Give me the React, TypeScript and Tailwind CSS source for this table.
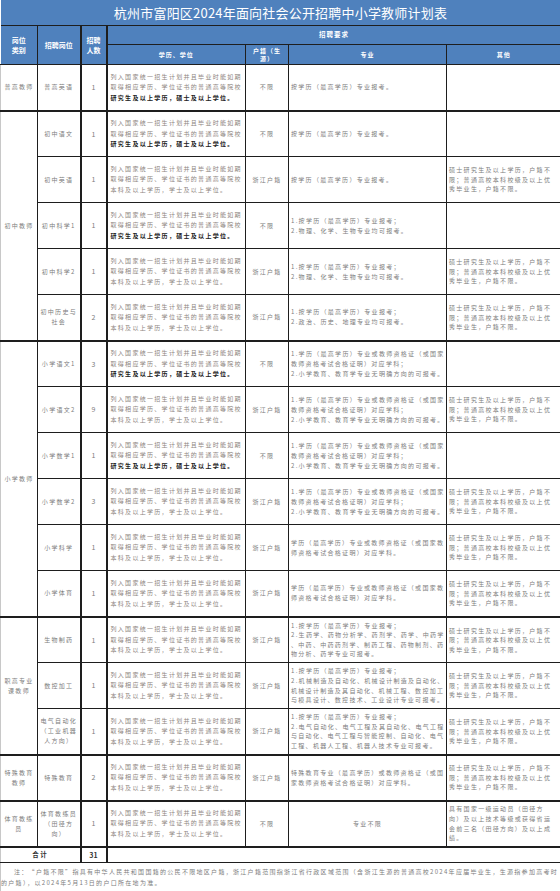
import React from "react";

const EDU1 = "列入国家统一招生计划并且毕业时能如期";
const EDU2 = "取得相应学历、学位证书的普通高等院校";
const EDU_A3 = "研究生及以上学历，硕士及以上学位。";
const EDU_B3 = "本科及以上学历，学士及以上学位。";
const OTHER = ["硕士研究生及以上学历，户籍不", "限；普通高校本科校级及以上优", "秀毕业生，户籍不限。"];
const ZY_PLAIN = ["按学历（最高学历）专业报考。"];
const ZY_SCI = ["1.按学历（最高学历）专业报考；", "2.物理、化学、生物专业均可报考。"];
const ZY_HIS = ["1.按学历（最高学历）专业报考；", "2.政治、历史、地理专业均可报考。"];
const ZY_XX = ["1.学历（最高学历）专业或教师资格证（或国家", "教师资格考试合格证明）对应学科；", "2.小学教育、教育学专业无明确方向的可报考。"];
const ZY_XX2 = ["学历（最高学历）专业或教师资格证（或国家教", "师资格考试合格证明）对应学科。"];
const ZY_BIO = ["1.按学历（最高学历）专业报考；", "2.生药学、药物分析学、药剂学、药学、中药学", "、中药、中药药剂学、制药工程、药物制剂、药", "物分析、药学专业可报考。"];
const ZY_CNC = ["1.按学历（最高学历）专业报考；", "2.机械制造及自动化、机械设计制造及自动化、", "机械设计制造及其自动化、机械工程、数控加工", "与模具设计、数控技术、工业设计专业可报考。"];
const ZY_ELE = ["1.按学历（最高学历）专业报考；", "2.电气自动化、电气工程及其自动化、电气工程", "与自动化、电气工程与智能控制、自动化、电气", "工程、机器人工程、机器人技术专业可报考。"];
const ZY_TS = ["特殊教育专业（最高学历）或教师资格证（或国", "家教师资格考试合格证明）对应学科。"];
const OTHER_PE = ["具有国家一级运动员（田径方", "向）及以上技术等级或获得省运", "会前三名（田径方向）及以上成", "绩。"];

type Row = {
  cat?: { lines: string[]; span: number };
  pos: string[];
  n: string;
  a: boolean;
  hj: string;
  zy: string[];
  zyCenter?: boolean;
  other: string[];
  end?: boolean;
};

const rows: Row[] = [
  { cat: { lines: ["普高教师"], span: 1 }, pos: ["普高英语"], n: "1", a: true, hj: "不限", zy: ZY_PLAIN, other: [], end: true },
  { cat: { lines: ["初中教师"], span: 5 }, pos: ["初中语文"], n: "1", a: true, hj: "不限", zy: ZY_PLAIN, other: [] },
  { pos: ["初中英语"], n: "1", a: false, hj: "浙江户籍", zy: ZY_PLAIN, other: OTHER },
  { pos: ["初中科学1"], n: "1", a: true, hj: "不限", zy: ZY_SCI, other: [] },
  { pos: ["初中科学2"], n: "1", a: false, hj: "浙江户籍", zy: ZY_SCI, other: OTHER },
  { pos: ["初中历史与", "社会"], n: "2", a: false, hj: "浙江户籍", zy: ZY_HIS, other: OTHER, end: true },
  { cat: { lines: ["小学教师"], span: 6 }, pos: ["小学语文1"], n: "3", a: true, hj: "不限", zy: ZY_XX, other: [] },
  { pos: ["小学语文2"], n: "9", a: false, hj: "浙江户籍", zy: ZY_XX, other: OTHER },
  { pos: ["小学数学1"], n: "1", a: true, hj: "不限", zy: ZY_XX, other: [] },
  { pos: ["小学数学2"], n: "3", a: false, hj: "浙江户籍", zy: ZY_XX, other: OTHER },
  { pos: ["小学科学"], n: "1", a: false, hj: "浙江户籍", zy: ZY_XX2, other: OTHER },
  { pos: ["小学体育"], n: "1", a: false, hj: "浙江户籍", zy: ZY_XX2, other: OTHER, end: true },
  { cat: { lines: ["职高专业", "课教师"], span: 3 }, pos: ["生物制药"], n: "1", a: false, hj: "浙江户籍", zy: ZY_BIO, other: OTHER },
  { pos: ["数控加工"], n: "1", a: false, hj: "浙江户籍", zy: ZY_CNC, other: OTHER },
  { pos: ["电气自动化", "（工业机器", "人方向）"], n: "1", a: false, hj: "浙江户籍", zy: ZY_ELE, other: OTHER, end: true },
  { cat: { lines: ["特殊教育", "教师"], span: 1 }, pos: ["特殊教育"], n: "2", a: false, hj: "浙江户籍", zy: ZY_TS, other: OTHER, end: true },
  { cat: { lines: ["体育教练", "员"], span: 1 }, pos: ["体育教练员", "（田径方", "向）"], n: "1", a: false, hj: "不限", zy: ["专业不限"], zyCenter: true, other: OTHER_PE, end: true },
];

function Lines({ lines, className = "" }: { lines: string[]; className?: string }) {
  return (
    <div className={className}>
      {lines.map((l, i) => (
        <div key={i} className="whitespace-nowrap">
          {l}
        </div>
      ))}
    </div>
  );
}

export default function App() {
  const cell = "border border-[#1e1e1e] p-0 align-middle";
  const txt = "text-[6px] tracking-[1.3px] text-[#7d7d7d]";
  return (
    <div className="w-[560px] bg-white font-['Noto_Sans_CJK_SC','Noto_Sans',sans-serif]">
      <table className="w-[560px] table-fixed border-collapse">
        <colgroup>
          <col className="w-[37px]" />
          <col className="w-[43px]" />
          <col className="w-[26px]" />
          <col className="w-[139px]" />
          <col className="w-[43px]" />
          <col className="w-[158px]" />
          <col className="w-[114px]" />
        </colgroup>
        <tbody>
          <tr className="h-[25px]">
            <td colSpan={7} className="border-b border-[#1e1e1e] bg-[#4f81bd] p-0 text-center text-[13px] leading-[25px] tracking-[0.2px] text-white">
              杭州市富阳区2024年面向社会公开招聘中小学教师计划表
            </td>
          </tr>
          <tr className="h-[19px]">
            <td rowSpan={2} className={`${cell} border-l-0 bg-[#4f81bd] text-center text-[7px] font-bold leading-[10px] text-white`}>
              <div>岗位</div>
              <div>类别</div>
            </td>
            <td rowSpan={2} className={`${cell} border-r-2 bg-[#4f81bd] text-center text-[7px] font-bold leading-[10px] text-white`}>
              招聘岗位
            </td>
            <td rowSpan={2} className={`${cell} border-r-2 bg-[#4f81bd] text-center text-[7px] font-bold leading-[10px] text-white`}>
              <div>招聘</div>
              <div>人数</div>
            </td>
            <td colSpan={4} className={`${cell} border-r-0 bg-[#4f81bd] text-center text-[6.5px] font-bold tracking-[1px] text-white`}>
              招聘要求
            </td>
          </tr>
          <tr className="h-[20px]">
            <td className={`${cell} bg-[#4f81bd] text-center text-[6px] font-bold tracking-[1px] text-white`}>学历、学位</td>
            <td className={`${cell} bg-[#4f81bd] text-center text-[6px] font-bold leading-[8px] tracking-[1px] text-white`}>
              <div>户籍（生</div>
              <div>源）</div>
            </td>
            <td className={`${cell} bg-[#4f81bd] text-center text-[6px] font-bold tracking-[1px] text-white`}>专业</td>
            <td className={`${cell} border-r-0 bg-[#4f81bd] text-center text-[6px] font-bold tracking-[1px] text-white`}>其他</td>
          </tr>
          {rows.map((r, i) => {
            const bb = r.end ? "border-b-2" : "";
            return (
              <tr key={i} className="h-[46px]">
                {r.cat && (
                  <td
                    rowSpan={r.cat.span}
                    className={`${cell} border-l border-l-[#c8c8c8] border-b-2 text-center ${txt} leading-[10px]`}
                  >
                    <Lines lines={r.cat.lines} />
                  </td>
                )}
                <td className={`${cell} ${bb} border-r-2 text-center ${txt} leading-[10px]`}>
                  <Lines lines={r.pos} />
                </td>
                <td className={`${cell} ${bb} border-r-2 text-center text-[7px] text-[#7d7d7d]`}>{r.n}</td>
                <td className={`${cell} ${bb} pl-[3px] ${txt} leading-[10.5px] text-[#8e8580]`}>
                  <div className="whitespace-nowrap">{EDU1}</div>
                  <div className="whitespace-nowrap">{EDU2}</div>
                  {r.a ? (
                    <div className="whitespace-nowrap font-bold text-[#222]">{EDU_A3}</div>
                  ) : (
                    <div className="whitespace-nowrap">{EDU_B3}</div>
                  )}
                </td>
                <td className={`${cell} ${bb} text-center ${txt} leading-[10px]`}>{r.hj}</td>
                <td
                  className={`${cell} ${bb} ${r.zyCenter ? "text-center" : "pl-[2px] text-left"} ${txt} ${
                    r.zy.length > 3 ? "leading-[9.6px]" : "leading-[10px]"
                  }`}
                >
                  <Lines lines={r.zy} />
                </td>
                <td className={`${cell} ${bb} pl-[2px] ${txt} ${r.other.length > 3 ? "leading-[9.6px]" : "leading-[9.5px]"}`}>
                  <Lines lines={r.other} />
                </td>
              </tr>
            );
          })}
          <tr className="h-[16px]">
            <td colSpan={2} className={`${cell} border-l border-l-[#c8c8c8] border-r-2 text-center text-[6.5px] font-bold tracking-[1.5px] text-[#333]`}>
              合计
            </td>
            <td className={`${cell} border-r-2 text-center text-[7px] font-bold text-[#333]`}>31</td>
            <td colSpan={4} className={cell}></td>
          </tr>
          <tr className="h-[29px]">
            <td colSpan={7} className={`${cell} border-l border-l-[#c8c8c8] ${txt} leading-[11px]`}>
              <div className="whitespace-nowrap pl-[13px]">
                注：“户籍不限”指具有中华人民共和国国籍的公民不限地区户籍，浙江户籍范围指浙江省行政区域范围（含浙江生源的普通高校2024年应届毕业生，生源指参加高考时
              </div>
              <div className="whitespace-nowrap">的户籍），以2024年5月13日的户口所在地为准。</div>
            </td>
          </tr>
        </tbody>
      </table>
    </div>
  );
}
